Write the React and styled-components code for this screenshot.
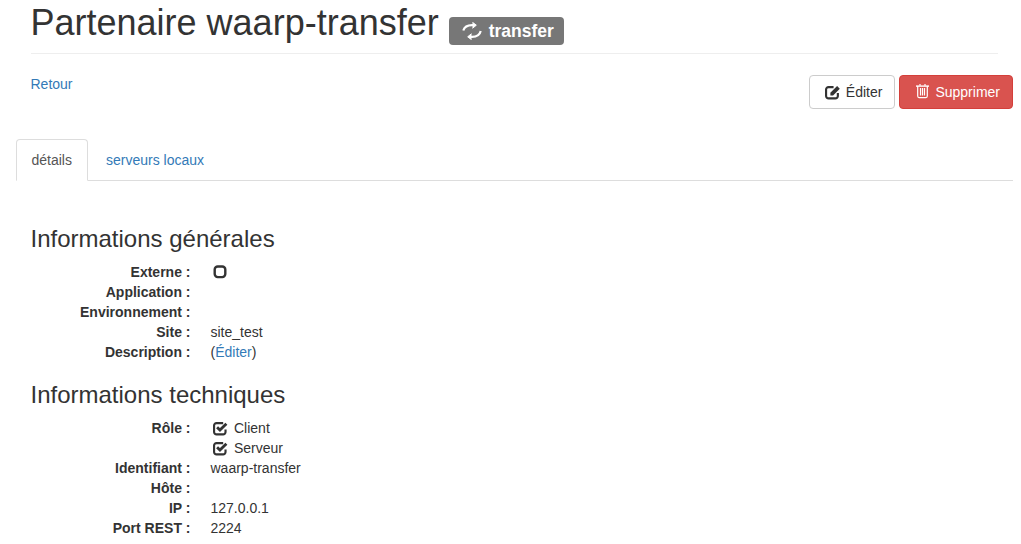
import React from 'react';
import styled, { createGlobalStyle } from 'styled-components';

const GlobalStyle = createGlobalStyle`
  html, body {
    margin: 0;
    height: 544px;
    overflow: hidden;
    background: #fff;
  }
  body {
    font-family: "Liberation Sans", Arial, sans-serif;
    font-size: 14px;
    line-height: 20px;
    color: #333;
  }
  * {
    box-sizing: border-box;
  }
`;

const Page = styled.div`
  width: 1021px;
  padding: 0 8px 0 15.5px;
`;
const Header = styled.div`
  margin: 3px 15px 0;
  padding-bottom: 10px;
  border-bottom: 1px solid #eee;
`;
const Title = styled.h1`
  height: 40px;
  margin: 0;
  font-size: 36px;
  font-weight: 500;
  line-height: 40px;
`;
const Badge = styled.span`
  display: inline-flex;
  align-items: center;
  gap: 7px;
  height: 28px;
  padding: 0 10px 0 13px;
  font-size: 17.5px;
  font-weight: 700;
  line-height: 28px;
  color: #fff;
  background: #777;
  border-radius: 4px;
  vertical-align: -5px;
`;
const Toolbar = styled.div`
  display: flex;
  justify-content: space-between;
  align-items: flex-start;
  margin-top: 21px;
  padding-left: 15px;
`;
const BackLink = styled.a`
  margin-top: -1px;
  color: #337ab7;
  text-decoration: none;
`;
const Actions = styled.div`
  display: flex;
  gap: 4px;
`;
const Button = styled.button`
  display: flex;
  align-items: center;
  gap: 6px;
  height: 34px;
  padding: 0 12px;
  font: inherit;
  color: ${({ $danger }) => ($danger ? '#fff' : '#333')};
  background: ${({ $danger }) => ($danger ? '#d9534f' : '#fff')};
  border: 1px solid ${({ $danger }) => ($danger ? '#d43f3a' : '#ccc')};
  border-radius: 4px;
`;
const Tabs = styled.ul`
  display: flex;
  margin: 30px 0 0;
  padding: 0;
  list-style: none;
  border-bottom: 1px solid #ddd;
`;
const Tab = styled.li`
  height: 42px;
  margin-bottom: -1px;
  margin-right: 2px;
  padding: 10px 15px;
  color: ${({ $active }) => ($active ? '#555' : '#337ab7')};
  background: ${({ $active }) => ($active ? '#fff' : 'transparent')};
  border: 1px solid ${({ $active }) => ($active ? '#ddd' : 'transparent')};
  border-bottom-color: ${({ $active }) => ($active ? '#fff' : 'transparent')};
  border-radius: 4px 4px 0 0;
`;
const Content = styled.div`
  padding: 0 15px;
`;
const SectionTitle = styled.h3`
  margin: ${({ $first }) => ($first ? '45px' : '20px')} 0 10px;
  font-size: 24px;
  font-weight: 500;
  line-height: 26px;
`;
const Details = styled.dl`
  display: grid;
  grid-template-columns: 160px 1fr;
  column-gap: 20px;
  margin: 0;
`;
const Label = styled.dt`
  font-weight: 700;
  text-align: right;
`;
const Value = styled.dd`
  display: flex;
  align-items: center;
  gap: 6px;
  min-height: 20px;
  margin: 0;
`;
const IconValue = styled(Value)`
  padding-left: 2.5px;
`;
const InlineLink = styled.a`
  color: #337ab7;
  text-decoration: none;
`;

const RetweetIcon = () => (
  <svg width="20" height="18" viewBox="0 0 20 18" fill="none" stroke="currentColor" strokeWidth="2.2">
    <path d="M1.300 8.500C2.500 4.500 6 2.800 11.500 3.200" />
    <path d="M18.700 9C17.800 13 14 15.200 8.500 14.800" />
    <path d="M10.500 .3 14.300 3.200 10.500 6.300" fill="currentColor" strokeWidth="1" />
    <path d="M9.500 11.700 5.700 14.800 9.500 17.700" fill="currentColor" strokeWidth="1" />
  </svg>
);

const EditIcon = () => (
  <svg width="18" height="15" viewBox="-2.800 0 16.800 14" fill="none">
    <path d="M12 7.500v2.700A2.300 2.300 0 0 1 9.700 12.500H3.300A2.300 2.300 0 0 1 1 10.200V4.300A2.300 2.300 0 0 1 3.300 2H8" stroke="#333" strokeWidth="2" />
    <path d="M5 9.800V7.300L11.300 1 13.800 3.500 7.500 9.800Z" fill="#333" />
  </svg>
);

const TrashIcon = () => (
  <svg width="17" height="16" viewBox="-4 1.500 17 16" fill="none" stroke="#fff" strokeWidth="1.200">
    <path d="M0 3.600h13" strokeWidth="1.400" />
    <path d="M4 3.200V1.600Q4 .8 4.800 .8h3.400Q9 .8 9 1.600v1.600" />
    <path d="M1.700 3.500v10.100q0 1.500 1.300 1.500h7q1.300 0 1.300-1.500V3.500" />
    <path d="M4.500 5.500v7.500M6.500 5.500v7.500M8.500 5.500v7.500" />
  </svg>
);

const CheckIcon = () => (
  <svg width="15" height="15" viewBox="0 0 14 14" fill="none" stroke="#333">
    <path d="M11.700 8v2.200a2.300 2.300 0 0 1-2.300 2.300H3.300A2.300 2.300 0 0 1 1 10.200V4.300A2.300 2.300 0 0 1 3.300 2H9.500" strokeWidth="2" />
    <path d="M3.800 5.800 6.500 8.500 12.500 2.500" strokeWidth="2.600" />
  </svg>
);

const EmptyBox = () => (
  <svg width="14" height="14" viewBox="0 0 14 14" fill="none" stroke="#333" strokeWidth="2.400">
    <rect x="1.700" y="1.500" width="10.600" height="10.600" rx="3" />
  </svg>
);

export default function App() {
  return (
    <Page>
      <GlobalStyle />
      <Header>
        <Title>
          Partenaire waarp-transfer{' '}
          <Badge>
            <RetweetIcon />
            transfer
          </Badge>
        </Title>
      </Header>
      <Toolbar>
        <BackLink href="#">Retour</BackLink>
        <Actions>
          <Button>
            <EditIcon />
            Éditer
          </Button>
          <Button $danger>
            <TrashIcon />
            Supprimer
          </Button>
        </Actions>
      </Toolbar>
      <Tabs>
        <Tab $active>détails</Tab>
        <Tab>serveurs locaux</Tab>
      </Tabs>
      <Content>
        <SectionTitle $first>Informations générales</SectionTitle>
        <Details>
          <Label>Externe :</Label>
          <IconValue>
            <EmptyBox />
          </IconValue>
          <Label>Application :</Label>
          <Value />
          <Label>Environnement :</Label>
          <Value />
          <Label>Site :</Label>
          <Value>site_test</Value>
          <Label>Description :</Label>
          <Value>
            <span>
              (<InlineLink href="#">Éditer</InlineLink>)
            </span>
          </Value>
        </Details>
        <SectionTitle>Informations techniques</SectionTitle>
        <Details>
          <Label>Rôle :</Label>
          <IconValue>
            <CheckIcon />
            Client
          </IconValue>
          <Label />
          <IconValue>
            <CheckIcon />
            Serveur
          </IconValue>
          <Label>Identifiant :</Label>
          <Value>waarp-transfer</Value>
          <Label>Hôte :</Label>
          <Value />
          <Label>IP :</Label>
          <Value>127.0.0.1</Value>
          <Label>Port REST :</Label>
          <Value>2224</Value>
        </Details>
      </Content>
    </Page>
  );
}
